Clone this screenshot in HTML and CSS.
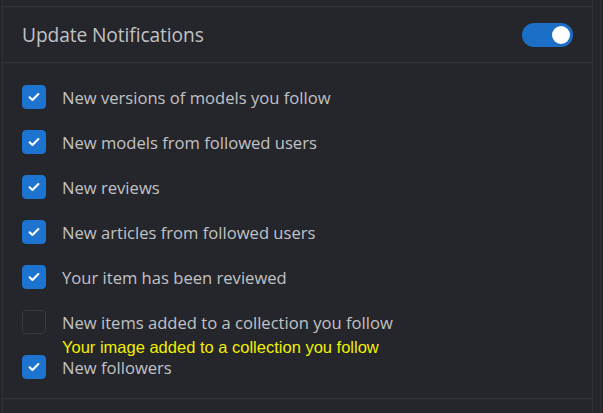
FILE: index.html
```html
<!DOCTYPE html>
<html>
<head>
<meta charset="utf-8">
<link rel="stylesheet" href="styles.css">
</head>
<body>
<div class="page">
  <div class="panel">
    <div class="prev"></div>
    <div class="item">
      <div class="header">
        <span class="title">Update Notifications</span>
        <span class="switch"><span class="thumb"></span></span>
      </div>
      <div class="content">
        <label class="row"><span class="box on"><svg viewBox="0 0 24 24" width="14" height="14"><path d="M4.5 12.5l4.8 4.6L19.5 7" fill="none" stroke="#fff" stroke-width="3.6" stroke-linecap="round" stroke-linejoin="round"/></svg></span><span class="text">New versions of models you follow</span></label>
        <label class="row"><span class="box on"><svg viewBox="0 0 24 24" width="14" height="14"><path d="M4.5 12.5l4.8 4.6L19.5 7" fill="none" stroke="#fff" stroke-width="3.6" stroke-linecap="round" stroke-linejoin="round"/></svg></span><span class="text">New models from followed users</span></label>
        <label class="row"><span class="box on"><svg viewBox="0 0 24 24" width="14" height="14"><path d="M4.5 12.5l4.8 4.6L19.5 7" fill="none" stroke="#fff" stroke-width="3.6" stroke-linecap="round" stroke-linejoin="round"/></svg></span><span class="text">New reviews</span></label>
        <label class="row"><span class="box on"><svg viewBox="0 0 24 24" width="14" height="14"><path d="M4.5 12.5l4.8 4.6L19.5 7" fill="none" stroke="#fff" stroke-width="3.6" stroke-linecap="round" stroke-linejoin="round"/></svg></span><span class="text">New articles from followed users</span></label>
        <label class="row"><span class="box on"><svg viewBox="0 0 24 24" width="14" height="14"><path d="M4.5 12.5l4.8 4.6L19.5 7" fill="none" stroke="#fff" stroke-width="3.6" stroke-linecap="round" stroke-linejoin="round"/></svg></span><span class="text">Your item has been reviewed</span></label>
        <label class="row"><span class="box"></span><span class="text">New items added to a collection you follow</span><span class="note">Your image added to a collection you follow</span></label>
        <label class="row"><span class="box on"><svg viewBox="0 0 24 24" width="14" height="14"><path d="M4.5 12.5l4.8 4.6L19.5 7" fill="none" stroke="#fff" stroke-width="3.6" stroke-linecap="round" stroke-linejoin="round"/></svg></span><span class="text">New followers</span></label>
      </div>
    </div>
  </div>
</div>
</body>
</html>
```
FILE: styles.css
```css
html, body {
  margin: 0;
  padding: 0;
  background: #25262b;
}
body {
  font-family: "Open Sans", "Noto Sans", sans-serif;
  color: #c1c2c5;
}
.page {
  width: 601px;
  height: 413px;
  border-right: 1px solid #303136;
  box-sizing: border-box;
  overflow: hidden;
}
.panel {
  margin-left: 2px;
  width: 591px;
  box-sizing: border-box;
  border-left: 1px solid #303136;
  border-right: 1px solid #303136;
  min-height: 413px;
}
.prev {
  height: 6px;
}
.item {
  border-top: 1px solid #35363b;
  border-bottom: 1px solid #35363b;
}
.header {
  height: 55px;
  display: flex;
  align-items: center;
  justify-content: space-between;
  padding: 0 19px 0 19px;
  border-bottom: 1px solid #35363b;
}
.title {
  font-size: 19.2px;
  color: #c1c2c5;
  letter-spacing: -0.1px;
}
.switch {
  width: 51px;
  height: 24px;
  border-radius: 12px;
  background: #1c6fc6;
  display: flex;
  align-items: center;
  justify-content: flex-end;
  padding: 0 3px;
  box-sizing: border-box;
}
.thumb {
  width: 18px;
  height: 18px;
  border-radius: 50%;
  background: #fff;
}
.content {
  padding: 22px 19px 19px 19px;
  display: flex;
  flex-direction: column;
  gap: 21px;
}
.row {
  position: relative;
  display: flex;
  align-items: center;
  gap: 16px;
  height: 24px;
}
.box {
  width: 24px;
  height: 24px;
  box-sizing: border-box;
  border-radius: 4px;
  border: 1px solid #373a40;
  background: #25262b;
  display: flex;
  align-items: center;
  justify-content: center;
  flex: none;
}
.box.on {
  background: #1c74d0;
  border-color: #1c74d0;
}
.text {
  font-size: 16.6px;
  color: #c1c2c5;
}
.note {
  position: absolute;
  left: 40px;
  top: 28px;
  font-family: "Liberation Sans", Arial, sans-serif;
  font-size: 16.5px;
  line-height: 19px;
  color: #f0f000;
  white-space: nowrap;
}
```
